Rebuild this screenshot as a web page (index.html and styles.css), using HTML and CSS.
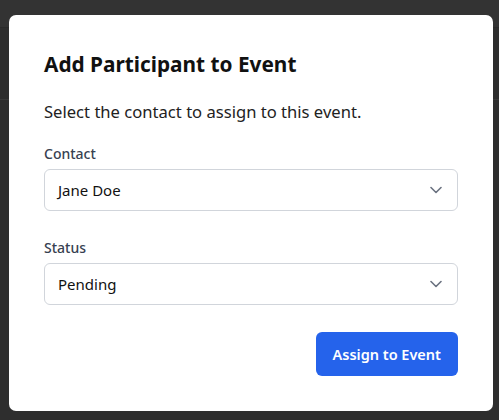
FILE: index.html
```html
<!DOCTYPE html>
<html lang="en">
<head>
<meta charset="utf-8">
<title>Add Participant to Event</title>
<link rel="stylesheet" href="styles.css">
</head>
<body>
<div class="backdrop">
  <div class="page-bar"></div>
  <div class="page-row"></div>
  <div class="modal">
    <h2 class="title">Add Participant to Event</h2>
    <p class="desc">Select the contact to assign to this event.</p>
    <div class="field">
      <label class="label">Contact</label>
      <div class="select">
        <span class="value">Jane Doe</span>
        <svg class="chev" width="12" height="8" viewBox="0 0 12 8"><path d="M1 1.5l5 5 5-5" fill="none" stroke="#6b7280" stroke-width="1.6" stroke-linecap="round" stroke-linejoin="round"/></svg>
      </div>
    </div>
    <div class="field second">
      <label class="label">Status</label>
      <div class="select">
        <span class="value">Pending</span>
        <svg class="chev" width="12" height="8" viewBox="0 0 12 8"><path d="M1 1.5l5 5 5-5" fill="none" stroke="#6b7280" stroke-width="1.6" stroke-linecap="round" stroke-linejoin="round"/></svg>
      </div>
    </div>
    <div class="actions">
      <button class="btn">Assign to Event</button>
    </div>
  </div>
</div>
</body>
</html>
```
FILE: styles.css
```css
* { box-sizing: border-box; }
html, body { margin: 0; padding: 0; }
body {
  background: #2e2e2e;
  font-family: "Noto Sans", "Liberation Sans", sans-serif;
  width: 499px;
  height: 420px;
  overflow: hidden;
}
.backdrop {
  position: relative;
  width: 499px;
  height: 420px;
  padding: 15px 0 0 9px;
}
.page-bar {
  position: absolute;
  left: 0; top: 0;
  width: 499px; height: 28px;
  background: #333333;
  border-bottom: 1px solid #2a2a2a;
}
.page-row {
  position: absolute;
  left: 0; top: 99px;
  width: 499px; height: 1px;
  background: #3a3a3a;
}
.modal {
  position: relative;
  width: 484px;
  background: #ffffff;
  border-radius: 7px;
  padding: 35px 35px 35px 35px;
}
.title {
  margin: 0;
  font-size: 20.8px;
  line-height: 28px;
  font-weight: 700;
  color: #111111;
}
.desc {
  margin: 22px 0 0 0;
  font-size: 16.6px;
  line-height: 24px;
  color: #222222;
}
.field { margin-top: 20px; display: flex; flex-direction: column; }
.field.second { margin-top: 27px; }
.label {
  font-size: 14px;
  line-height: 20px;
  font-weight: 500;
  color: #374151;
  margin-bottom: 5px;
}
.select {
  height: 42px;
  border: 1px solid #d1d5db;
  border-radius: 6px;
  display: flex;
  align-items: center;
  justify-content: space-between;
  padding: 0 15px 0 13px;
}
.value {
  font-size: 15px;
  color: #111111;
}
.chev { display: block; }
.actions {
  margin-top: 27px;
  display: flex;
  justify-content: flex-end;
}
.btn {
  height: 44px;
  padding: 0 17px;
  border: none;
  border-radius: 6px;
  background: #2563eb;
  color: #ffffff;
  font-family: inherit;
  font-size: 14.5px;
  font-weight: 600;
}
```
